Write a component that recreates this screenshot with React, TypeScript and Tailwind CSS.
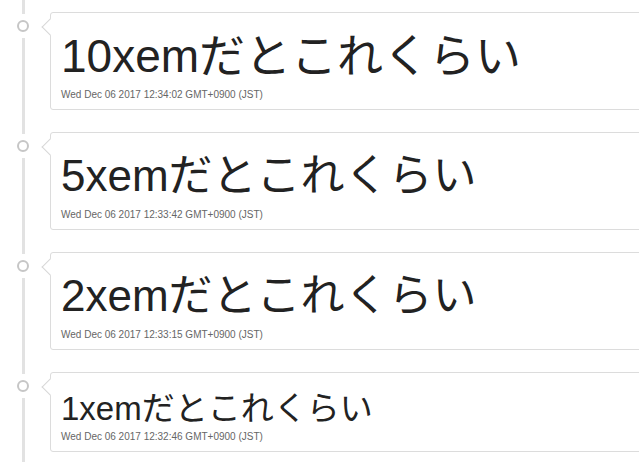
const items = [
  {
    text: "10xemだとこれくらい",
    time: "Wed Dec 06 2017 12:34:02 GMT+0900 (JST)",
    textClass: "text-[46px] leading-[50px]",
    timeClass: "mt-[7px]",
  },
  {
    text: "5xemだとこれくらい",
    time: "Wed Dec 06 2017 12:33:42 GMT+0900 (JST)",
    textClass: "text-[44px] leading-[50px]",
    timeClass: "mt-[7px]",
  },
  {
    text: "2xemだとこれくらい",
    time: "Wed Dec 06 2017 12:33:15 GMT+0900 (JST)",
    textClass: "text-[44px] leading-[50px]",
    timeClass: "mt-[7px]",
  },
  {
    text: "1xemだとこれくらい",
    time: "Wed Dec 06 2017 12:32:46 GMT+0900 (JST)",
    textClass: "text-[33px] leading-[36px]",
    timeClass: "mt-[3px]",
  },
];

function TimelineItem({ text, time, textClass, timeClass }: { text: string; time: string; textClass: string; timeClass: string }) {
  return (
    <div className="flex pb-[10px]">
      {/* rail */}
      <div className="flex w-[46px] shrink-0 flex-col items-center">
        <div className="h-[14px] w-[3px] bg-[#e2e2e2]" />
        <div className="my-[6px] h-[12px] w-[12px] rounded-full border-2 border-[#c6c6c6] bg-white" />
        <div className="w-[3px] flex-1 bg-[#e2e2e2] -mb-[10px]" />
      </div>

      {/* card */}
      <div className="relative ml-[4px] mr-[-4px] mt-[12px] flex-1 rounded-[3px] border border-[#dcdcdc] bg-white pl-[10px] pt-[18px] pb-[7px]">
        <div className="absolute left-[-7px] top-[8px] h-[12px] w-[12px] rotate-45 border-b border-l border-[#d6d6d6] bg-white" />
        <div className={`${textClass} text-[#222] font-['Liberation_Sans','Noto_Sans_CJK_JP',sans-serif] whitespace-nowrap`}>
          {text}
        </div>
        <div className={`${timeClass} text-[10px] leading-[14px] text-[#666] font-['Liberation_Sans',sans-serif]`}>
          {time}
        </div>
      </div>
    </div>
  );
}

export default function App() {
  return (
    <div className="h-screen w-full overflow-hidden bg-white">
      {items.map((it) => (
        <TimelineItem key={it.time} {...it} />
      ))}
    </div>
  );
}
